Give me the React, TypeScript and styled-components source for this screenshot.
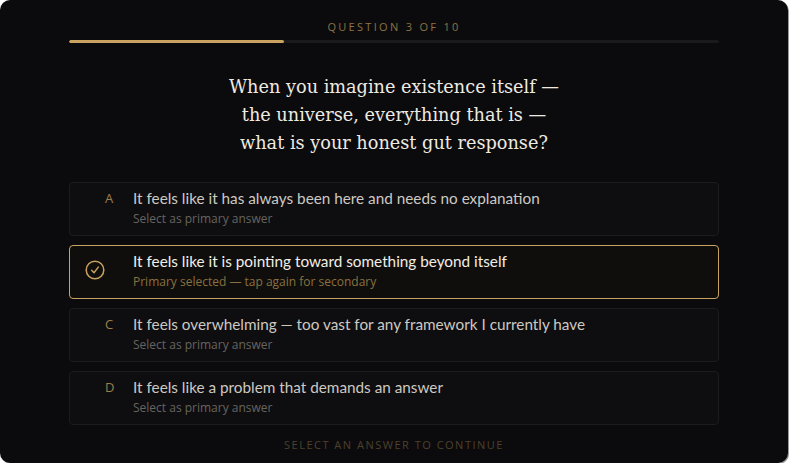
import styled, { createGlobalStyle } from "styled-components";

const GlobalStyle = createGlobalStyle`
  body {
    margin: 0;
    background: #ffffff;
    font-family: "Open Sans", "Liberation Sans", sans-serif;
  }
`;

const Panel = styled.div`
  width: 788px;
  height: 463px;
  box-sizing: border-box;
  background: #0b0b0e;
  border-radius: 10px;
  box-shadow: 1px 1px 0 #9a9a9a;
  padding: 20px 69px 0;
  display: flex;
  flex-direction: column;
`;

const Counter = styled.div`
  text-align: center;
  font-size: 11px;
  line-height: 14px;
  letter-spacing: 2.3px;
  color: #8c7343;
`;

const Track = styled.div`
  margin-top: 6px;
  height: 3px;
  border-radius: 2px;
  background: #1a1a1d;
  overflow: hidden;
`;

const Fill = styled.div`
  height: 100%;
  background: #c9a35f;
  border-radius: 2px;
`;

const Question = styled.h1`
  margin: 30px 0 0;
  text-align: center;
  font-family: "DejaVu Serif", Georgia, serif;
  font-weight: 400;
  font-size: 17.7px;
  line-height: 28px;
  color: #efeae0;
`;

const Options = styled.div`
  margin-top: 25px;
  display: flex;
  flex-direction: column;
  gap: 9px;
`;

const Card = styled.div<{ $selected?: boolean }>`
  height: 54px;
  box-sizing: border-box;
  display: flex;
  align-items: flex-start;
  padding: 5px 16px 8px 15px;
  border-radius: 4px;
  border: 1px solid ${(p) => (p.$selected ? "#c9a35f" : "#1c1c1f")};
  background: ${(p) => (p.$selected ? "#0f0e0c" : "#0e0e11")};
  cursor: pointer;
`;

const Marker = styled.div`
  width: 48px;
  flex-shrink: 0;
  height: 42px;
  display: flex;
  align-items: flex-start;
`;

const IconSlot = styled.div`
  height: 42px;
  display: flex;
  align-items: center;
`;

const Letter = styled.span`
  padding-left: 20px;
  font-size: 13px;
  line-height: 20px;
  color: #9c7f4a;
`;

const Body = styled.div`
  display: flex;
  flex-direction: column;
  gap: 3px;
`;

const Main = styled.div<{ $selected?: boolean }>`
  font-family: Lato, "Open Sans", sans-serif;
  font-size: 15.3px;
  line-height: 20px;
  color: ${(p) => (p.$selected ? "#f2eee6" : "#cdc9c1")};
`;

const Sub = styled.div<{ $selected?: boolean }>`
  font-size: 12px;
  line-height: 16px;
  color: ${(p) => (p.$selected ? "#8a713f" : "#67645f")};
`;

const Footer = styled.div`
  margin-top: 13px;
  text-align: center;
  font-size: 11px;
  line-height: 14px;
  letter-spacing: 1.5px;
  color: #4d412c;
`;

const options = [
  { letter: "A", text: "It feels like it has always been here and needs no explanation" },
  { letter: "B", text: "It feels like it is pointing toward something beyond itself" },
  { letter: "C", text: "It feels overwhelming — too vast for any framework I currently have" },
  { letter: "D", text: "It feels like a problem that demands an answer" },
];

function CheckCircle() {
  return (
    <svg width="20" height="20" viewBox="0 0 20 20" fill="none" style={{ marginTop: -4 }}>
      <circle cx="10" cy="10" r="8.8" stroke="#c9a35f" strokeWidth="1.5" />
      <path d="M6.6 10.3 L9 12.7 L13.3 7.1" stroke="#c9a35f" strokeWidth="1.4" strokeLinecap="round" strokeLinejoin="round" />
    </svg>
  );
}

export default function App() {
  const selected = "B";
  const progress = 3 / 9.05;

  return (
    <>
      <GlobalStyle />
      <Panel>
        <Counter>QUESTION 3 OF 10</Counter>
        <Track>
          <Fill style={{ width: `${progress * 100}%` }} />
        </Track>
        <Question>
          When you imagine existence itself —
          <br />
          the universe, everything that is —
          <br />
          what is your honest gut response?
        </Question>
        <Options>
          {options.map((o) => {
            const isSel = o.letter === selected;
            return (
              <Card key={o.letter} $selected={isSel}>
                <Marker>
                  {isSel ? (
                    <IconSlot>
                      <CheckCircle />
                    </IconSlot>
                  ) : (
                    <Letter>{o.letter}</Letter>
                  )}
                </Marker>
                <Body>
                  <Main $selected={isSel}>{o.text}</Main>
                  <Sub $selected={isSel}>
                    {isSel ? "Primary selected — tap again for secondary" : "Select as primary answer"}
                  </Sub>
                </Body>
              </Card>
            );
          })}
        </Options>
        <Footer>SELECT AN ANSWER TO CONTINUE</Footer>
      </Panel>
    </>
  );
}
